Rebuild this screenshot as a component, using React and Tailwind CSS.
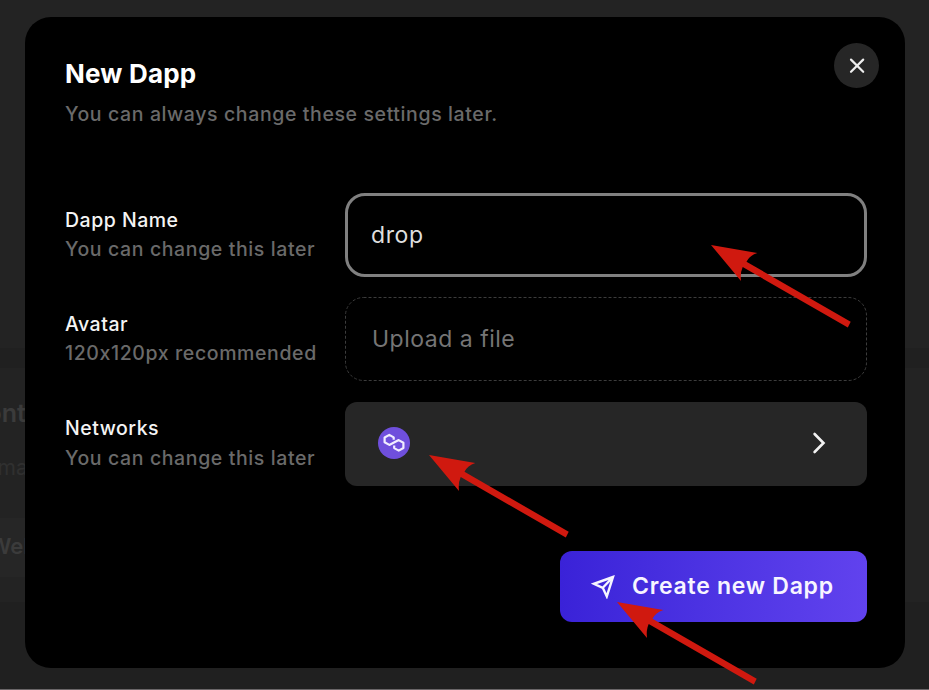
function Arrow({ className }) {
  return (
    <svg className={`absolute z-20 ${className}`} width="142" height="86" viewBox="0 0 142 86" fill="#d0190f" aria-hidden="true">
      <path d="M1 1 L47.3 9 Q39.5 11.5 36.5 17.8 L140.7 77.7 L137.8 83.6 L32.7 23 Q30 29 31 37 Z" />
    </svg>
  );
}

function Backdrop() {
  return (
    <div className="absolute inset-0 flex flex-col bg-[#202020] font-semibold text-[#3b3b3b]">
      <div className="h-[348px] bg-[#232323]" />
      <div className="h-5" />
      <div className="flex h-[234px] w-full flex-col overflow-hidden bg-[#232323]">
        <div className="mt-[30px] -ml-[32px] h-[30px] text-[25px] leading-[30px]">Contract</div>
        <div className="mt-[26px] -ml-[15px] h-[28px] text-[21px] leading-[28px] font-normal text-[#303030]">Email</div>
        <div className="mt-[36px] -ml-[11px] h-[59px] w-[200px] bg-[#262626] text-[22px] leading-[57px]">Web3</div>
      </div>
      <div className="flex-1" />
      <div className="h-px bg-[#6a6668]" />
    </div>
  );
}

function Field({ label, hint, children }) {
  return (
    <div className="flex items-center">
      <div className="w-[280px] shrink-0 text-[19.5px] leading-[29.5px] whitespace-nowrap">
        <div className="font-medium tracking-[0.5px] text-[#f4f4f4]">{label}</div>
        <div className="font-medium tracking-[0.61px] text-[#6a6a6a]">{hint}</div>
      </div>
      {children}
    </div>
  );
}

export default function App() {
  return (
    <div className="relative h-[690px] w-[929px] overflow-hidden bg-[#202020] font-['Inter',sans-serif]">
      <Backdrop />
      <div className="relative mt-[17px] ml-[25px] flex h-[651px] w-[880px] flex-col rounded-[26px] bg-black pr-[38px] pl-10">
        <header className="flex h-[176px] justify-between">
          <div className="pt-[40px]">
            <h1 className="text-[26px] leading-[34px] font-bold tracking-[0.2px] text-white">New Dapp</h1>
            <p className="mt-[8px] text-[19.5px] leading-[30px] font-medium tracking-[0.61px] text-[#6a6a6a]">You can always change these settings later.</p>
          </div>
          <button className="mt-[26px] -mr-[12px] flex size-[45px] items-center justify-center rounded-full bg-[#262626]">
            <svg width="16" height="16" viewBox="0 0 16 16" stroke="#ededed" strokeWidth="2.2" strokeLinecap="round">
              <path d="M2 1.6 L14.2 13.8 M14.2 1.6 L2 13.8" />
            </svg>
          </button>
        </header>

        <div className="flex flex-col gap-5">
          <Field label="Dapp Name" hint="You can change this later">
            <div className="flex h-[84px] w-[522px] items-center rounded-[20px] border-[3px] border-[#808080] px-[23px] text-[23px] tracking-[0.6px] text-[#dedede]">drop</div>
          </Field>
          <Field label="Avatar" hint="120x120px recommended">
            <div className="relative flex h-[84px] w-[522px] items-center px-[27px] text-[23px] tracking-[0.5px] text-[#757575]">
              <svg className="absolute inset-0" width="522" height="84" fill="none" stroke="#3c3c3c" strokeDasharray="3 2">
                <rect x="0.5" y="0.5" width="521" height="83" rx="18" />
              </svg>
              Upload a file
            </div>
          </Field>
          <Field label="Networks" hint="You can change this later">
            <div className="mt-px flex h-[84px] w-[522px] items-center justify-between rounded-[12px] bg-[#262626] pr-[40px] pb-[2px] pl-[33px]">
              <div className="flex size-8 items-center justify-center rounded-full bg-[#6f4fdc]">
                <svg width="24" height="20" viewBox="0 0 24 20" fill="none" stroke="#f1edff" strokeWidth="2.2" strokeLinejoin="round">
                  <path d="M11.7 6.8 V4.4 L7.3 1.9 L2.6 4.5 V9.3 L7.3 11.9 L16.7 7.1 L21.4 9.8 V15 L16.7 17.6 L12.2 15.1 V12.6" />
                </svg>
              </div>
              <svg width="16" height="24" viewBox="0 0 16 24" fill="none" stroke="#f2f2f2" strokeWidth="2.6" strokeLinecap="round">
                <path d="M3.6 3 L12.5 12 L3.6 21" />
              </svg>
            </div>
          </Field>
        </div>

        <button className="mt-[65px] flex h-[71px] w-[307px] items-center self-end rounded-[12px] bg-linear-to-r from-[#3a22d8] to-[#6142ee] pl-[31px] text-[23px] font-semibold tracking-[0.73px] whitespace-nowrap text-[#f7f5ff]">
          <svg className="mr-[17px] shrink-0" width="24" height="24" viewBox="0 0 24 24" fill="none" stroke="currentColor" strokeWidth="2.4" strokeLinejoin="miter">
            <path d="M22 2 L3 8.8 L11.8 12.8 L15.8 21.4 Z M22 2 L11.8 12.8" />
          </svg>
          Create new Dapp
        </button>
      </div>
      <Arrow className="top-[244px] left-[710px]" />
      <Arrow className="top-[454px] left-[428px]" />
      <Arrow className="top-[601px] left-[616px]" />
    </div>
  );
}
